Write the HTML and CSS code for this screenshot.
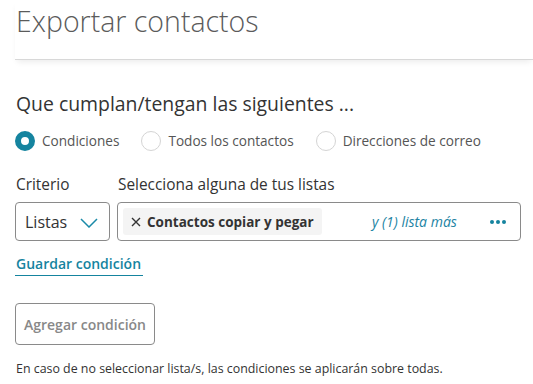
FILE: index.html
```html
<!DOCTYPE html>
<html lang="es">
<head>
<meta charset="utf-8">
<link rel="stylesheet" href="styles.css">
</head>
<body>
<div class="page">
  <header class="header">
    <h1 class="title">Exportar contactos</h1>
  </header>
  <section class="content">
    <h2 class="subtitle">Que cumplan/tengan las siguientes ...</h2>
    <div class="radios">
      <label class="radio"><span class="dot checked"></span>Condiciones</label>
      <label class="radio"><span class="dot"></span>Todos los contactos</label>
      <label class="radio"><span class="dot"></span>Direcciones de correo</label>
    </div>
    <div class="fields">
      <div class="field">
        <div class="label">Criterio</div>
        <div class="select">
          <span>Listas</span>
          <svg class="chev" width="18" height="10" viewBox="0 0 18 10"><path d="M1 1 L9 9 L17 1" fill="none" stroke="#1a8aa8" stroke-width="1.5"/></svg>
        </div>
      </div>
      <div class="field grow">
        <div class="label">Selecciona alguna de tus listas</div>
        <div class="multi">
          <span class="chip"><svg class="x" width="10" height="10" viewBox="0 0 10 10"><path d="M1 1 L9 9 M9 1 L1 9" stroke="#333" stroke-width="1.4"/></svg>Contactos copiar y pegar</span>
          <span class="more">y (1) lista más</span>
          <span class="dots"><i></i><i></i><i></i></span>
        </div>
      </div>
    </div>
    <a class="save">Guardar condición</a>
    <button class="add">Agregar condición</button>
    <p class="note">En caso de no seleccionar lista/s, las condiciones se aplicarán sobre todas.</p>
  </section>
</div>
</body>
</html>
```
FILE: styles.css
```css
* { box-sizing: border-box; }
html, body { margin: 0; padding: 0; background: #fff; }
body { font-family: "Open Sans", "Liberation Sans", sans-serif; color: #333; overflow: hidden; }
.page { width: 533px; height: 384px; overflow: hidden; }
.header {
  margin-left: 15px;
  height: 60px;
  border-bottom: 1px solid #d8d8d8;
  box-shadow: 0 4px 6px -2px rgba(0,0,0,0.08);
}
.title {
  margin: 0;
  padding: 0 0 0 1px;
  font-weight: 300;
  font-size: 28.5px;
  line-height: 42px;
  color: #5b5b5b;
}
.content { padding: 32px 0 0 15px; }
.subtitle {
  margin: 0 0 0 1px;
  font-weight: 400;
  font-size: 19.4px;
  line-height: 24px;
  color: #333;
}
.radios { display: flex; gap: 22px; margin-top: 15px; }
.radio { display: flex; align-items: center; gap: 7px; font-size: 13.6px; line-height: 20px; color: #555; }
.dot {
  width: 20px; height: 20px; border-radius: 50%;
  border: 1px solid #d4d4d4; background: #fff;
}
.dot.checked { border: 6px solid #15849f; background: #fff; }
.fields { display: flex; gap: 7px; margin-top: 24px; }
.field.grow { width: 404px; }
.label { font-size: 15.4px; line-height: 20px; color: #333; margin-left: 1px; }
.select, .multi {
  margin-top: 7px;
  height: 39px;
  border: 1px solid #8a8a8a;
  border-radius: 4px;
  display: flex; align-items: center;
}
.select { width: 95px; padding-left: 9px; font-size: 16px; color: #333; gap: 13px; }
.chev { margin-top: 3px; }
.multi { padding: 0 14px 0 5px; }
.chip {
  display: flex; align-items: center; gap: 6px;
  background: #f4f4f4; border-radius: 3px;
  height: 27px; width: 199px; padding: 0 0 0 8px;
  font-size: 13.5px; font-weight: 700; color: #333;
}
.more { margin-left: 50px; font-style: italic; font-size: 14px; color: #2283a3; }
.dots { margin-left: auto; display: flex; gap: 2px; }
.dots i { width: 4px; height: 4px; border-radius: 50%; background: #15849f; display: block; }
.save {
  display: inline-block;
  margin-top: 13px;
  font-size: 14px; font-weight: 600; color: #15849f;
  line-height: 20px;
  padding: 0 2px 1px 1px;
  border-bottom: 1px solid #15849f;
}
.add {
  display: block;
  margin-top: 27px;
  width: 140px; height: 42px;
  border: 1px solid #8a8a8a; border-radius: 4px;
  background: #fff;
  font-family: inherit; font-size: 14px; font-weight: 600; color: #888;
}
.note { margin: 15px 0 0 1px; font-size: 12.4px; line-height: 18px; color: #333; }
```
